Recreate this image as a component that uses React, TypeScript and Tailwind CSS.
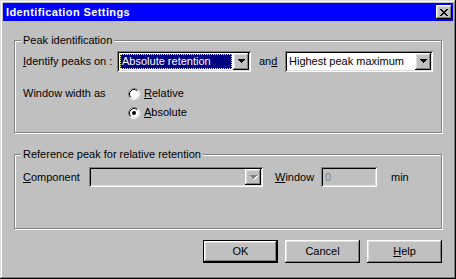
import React from "react";

const raised =
  "shadow-[inset_-1px_-1px_0_#000,inset_1px_1px_0_#fff,inset_-2px_-2px_0_#808080,inset_2px_2px_0_#dfdfdf]";
const sunken =
  "shadow-[inset_1px_1px_0_#808080,inset_-1px_-1px_0_#fff,inset_2px_2px_0_#000,inset_-2px_-2px_0_#dfdfdf]";

function Arrow({ disabled }: { disabled?: boolean }) {
  const d = "M0 0h7v1h-1v1h-1v1h-1v1h-1v-1h-1v-1h-1v-1h-1z";
  return (
    <svg width="8" height="5" viewBox="0 0 8 5" shapeRendering="crispEdges">
      {disabled && <path d={d} fill="#fff" transform="translate(1 1)" />}
      <path d={d} fill={disabled ? "#808080" : "#000"} />
    </svg>
  );
}

function DropBtn({ disabled, tall = true }: { disabled?: boolean; tall?: boolean }) {
  return (
    <div
      className={`w-[16px] ${tall ? "h-[17px]" : "h-[16px]"} shrink-0 bg-[#c0c0c0] ${raised} flex items-center justify-center pl-[1px]`}
    >
      <Arrow disabled={disabled} />
    </div>
  );
}

function Radio({ checked }: { checked?: boolean }) {
  return (
    <svg width="12" height="12" viewBox="0 0 12 12">
      <circle cx="6" cy="6" r="5" fill="#fff" />
      <path d="M2.11 9.89A5.5 5.5 0 0 1 9.89 2.11" fill="none" stroke="#808080" />
      <path d="M9.89 2.11A5.5 5.5 0 0 1 2.11 9.89" fill="none" stroke="#fff" />
      <path d="M2.82 9.18A4.5 4.5 0 0 1 9.18 2.82" fill="none" stroke="#000" />
      <path d="M9.18 2.82A4.5 4.5 0 0 1 2.82 9.18" fill="none" stroke="#dfdfdf" />
      {checked && <circle cx="6" cy="6" r="2" fill="#000" />}
    </svg>
  );
}

function CloseGlyph() {
  const rows = ["11000011", "01100110", "00111100", "00011000", "00111100", "01100110", "11000011"];
  return (
    <svg width="8" height="7" viewBox="0 0 8 7" shapeRendering="crispEdges">
      {rows.map((r, y) =>
        r.split("").map((c, x) =>
          c === "1" ? <rect key={`${x}-${y}`} x={x} y={y} width="1" height="1" fill="#000" /> : null
        )
      )}
    </svg>
  );
}

function Group({
  label,
  className,
  children,
}: {
  label: string;
  className: string;
  children?: React.ReactNode;
}) {
  return (
    <div
      className={`relative w-[428px] border border-[#808080] shadow-[inset_1px_1px_0_#fff,1px_1px_0_#fff] ${className}`}
    >
      <span className="absolute top-[-7px] left-[6px] px-[2px] bg-[#c0c0c0] leading-[13px]">
        {label}
      </span>
      {children}
    </div>
  );
}

function Button({ children, primary }: { children: React.ReactNode; primary?: boolean }) {
  if (primary) {
    return (
      <div className="w-[75px] h-[23px] border border-black">
        <div className={`w-full h-full ${raised} flex items-center justify-center`}>{children}</div>
      </div>
    );
  }
  return (
    <div className={`w-[75px] h-[23px] ${raised} flex items-center justify-center`}>{children}</div>
  );
}

export default function App() {
  return (
    <div
      className={`w-[456px] h-[279px] bg-[#c0c0c0] p-[3px] flex flex-col font-['Liberation_Sans',Arial,sans-serif] text-[11px] text-black shadow-[inset_-1px_-1px_0_#000,inset_1px_1px_0_#dfdfdf,inset_-2px_-2px_0_#808080,inset_2px_2px_0_#fff]`}
    >
      {/* title bar */}
      <div className="h-[18px] bg-[#0000ff] flex items-center justify-between pl-[3px] pr-[1px]">
        <span className="text-white font-bold text-[11px] tracking-[0.4px]">Identification Settings</span>
        <div className={`w-[16px] h-[14px] bg-[#c0c0c0] ${raised} flex items-center justify-center`}>
          <CloseGlyph />
        </div>
      </div>

      <div className="flex flex-col pl-[11px] pt-[19px]">
        <Group label="Peak identification" className="h-[93px] pt-[10px] pl-[8px]">
          <div className="flex items-center h-[21px]">
            <span className="w-[94px] shrink-0">
              <span className="underline">I</span>dentify peaks on :
            </span>
            <div className={`w-[134px] h-[21px] bg-white ${sunken} p-[2px] flex items-center`}>
              <div className="flex-1 mx-[1px] h-[15px] bg-[#000080] border border-dotted border-[#ffff80] text-white flex items-center pl-[1px]">
                Absolute retention
              </div>
              <DropBtn />
            </div>
            <span className="w-[34px] shrink-0 pl-[8px]">
              an<span className="underline">d</span>
            </span>
            <div className={`w-[148px] h-[21px] bg-white ${sunken} p-[2px] flex items-center`}>
              <span className="flex-1 pl-[2px]">Highest peak maximum</span>
              <DropBtn />
            </div>
          </div>

          <div className="flex mt-[12px]">
            <div className="w-[105px] h-[19px] flex items-center shrink-0">Window width as</div>
            <div className="flex flex-col">
              <div className="h-[19px] flex items-center gap-[4px]">
                <Radio />
                <span>
                  <span className="underline">R</span>elative
                </span>
              </div>
              <div className="h-[19px] flex items-center gap-[4px]">
                <Radio checked />
                <span>
                  <span className="underline">A</span>bsolute
                </span>
              </div>
            </div>
          </div>
        </Group>

        <Group label="Reference peak for relative retention" className="h-[75px] mt-[21px] pt-[12px] pl-[8px]">
          <div className="flex items-center h-[20px]">
            <span className="w-[66px] shrink-0">
              <span className="underline">C</span>omponent
            </span>
            <div className={`w-[174px] h-[20px] bg-[#c0c0c0] ${sunken} p-[2px] flex items-center justify-end`}>
              <DropBtn disabled tall={false} />
            </div>
            <span className="w-[58px] shrink-0 pl-[12px]">
              <span className="underline">W</span>indow
            </span>
            <div className={`w-[56px] h-[20px] bg-[#c0c0c0] ${sunken} flex items-center pl-[4px] text-[#808080]`}>
              0
            </div>
            <span className="pl-[14px]">min</span>
          </div>
        </Group>

        <div className="w-[428px] flex justify-end gap-[7px] mt-[11px]">
          <Button primary>OK</Button>
          <Button>Cancel</Button>
          <Button>
            <span>
              <span className="underline">H</span>elp
            </span>
          </Button>
        </div>
      </div>
    </div>
  );
}
